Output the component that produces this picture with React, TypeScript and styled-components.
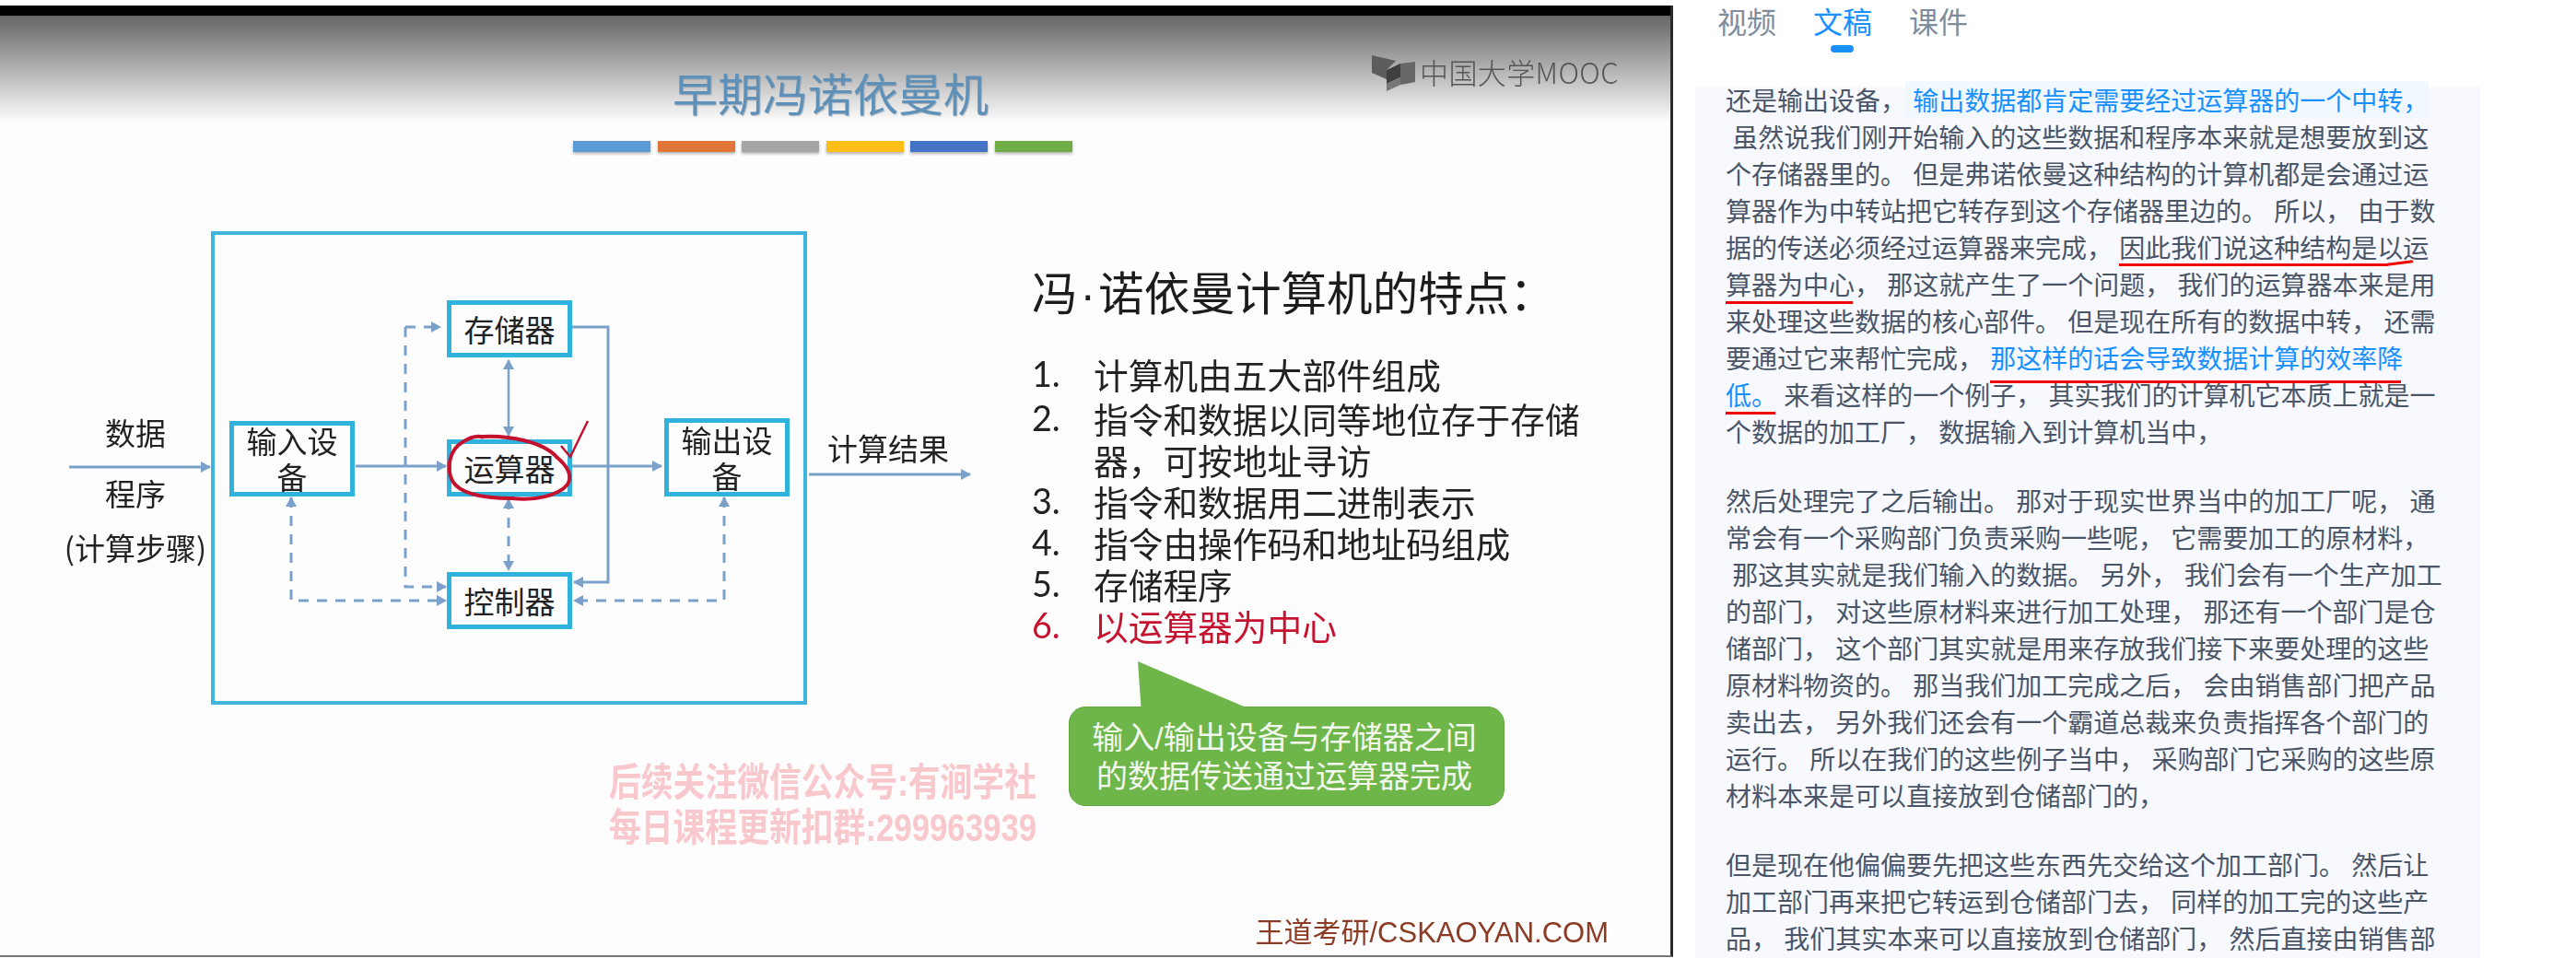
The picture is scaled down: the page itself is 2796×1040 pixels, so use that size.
import React from "react";
import styled, { createGlobalStyle } from "styled-components";

const CJK = `"Noto Sans CJK SC", "Liberation Sans", sans-serif`;

const GlobalStyle = createGlobalStyle`
  html, body {
    margin: 0;
    padding: 0;
    background: #fff;
    overflow: hidden;
  }
  * { box-sizing: border-box; }
`;

const bars = ["#5b9bd5", "#e07537", "#a5a5a5", "#fdbf17", "#4472c4", "#70ad47"];

const nodes = [
  { label: "存储器", x: 485, y: 86, w: 136, h: 62 },
  { label: "输入设备", x: 249, y: 217, w: 136, h: 82 },
  { label: "运算器", x: 485, y: 237, w: 136, h: 62 },
  { label: "输出设备", x: 721, y: 214, w: 136, h: 85 },
  { label: "控制器", x: 485, y: 381, w: 136, h: 62 },
];

const points = [
  "计算机由五大部件组成",
  "指令和数据以同等地位存于存储器，可按地址寻访",
  "指令和数据用二进制表示",
  "指令由操作码和地址码组成",
  "存储程序",
];

export default function App() {
  return (
    <Page>
      <GlobalStyle />
      <Slide>
        <BlackBand />
        <Header>
          <Title>早期冯诺依曼机</Title>
          <Logo>
            <svg width="48" height="40" viewBox="0 0 48 40">
              <polygon points="0,0 26,6 16,16 16,26 0,19" fill="#5c5c5c" />
              <polygon points="31,9 47,7 47,29 31,32" fill="#666" />
              <polygon points="16,16 31,9 31,24 16,31" fill="#3f3f3f" />
              <polygon points="16,31 31,24 31,32 16,39" fill="#777" />
            </svg>
            <LogoText>中国大学MOOC</LogoText>
          </Logo>
        </Header>
        <BarRow>
          {bars.map((c) => (
            <Bar key={c} $color={c} />
          ))}
        </BarRow>
        <Body>
          <Diagram>
            <Frame />
            <Wires width="1110" height="540" viewBox="0 0 1110 540">
              <defs>
                <marker id="head" markerUnits="userSpaceOnUse" markerWidth="11" markerHeight="12" refX="10" refY="6" orient="auto-start-reverse">
                  <path d="M0 0 L11 6 L0 12 Z" fill="#7ba1ca" />
                </marker>
              </defs>
              <g fill="none" stroke="#7ba1ca" strokeWidth="3">
                <path d="M75 267 H228" markerEnd="url(#head)" />
                <path d="M386 266 H484" markerEnd="url(#head)" />
                <path d="M621 266 H718" markerEnd="url(#head)" />
                <path d="M878 275 H1053" markerEnd="url(#head)" />
                <path d="M621 115 H660 V392 H623" markerEnd="url(#head)" />
                <path d="M552 151 V233" markerStart="url(#head)" markerEnd="url(#head)" strokeWidth="2.5" />
              </g>
              <g fill="none" stroke="#7ba1ca" strokeWidth="3" strokeDasharray="11 9">
                <path d="M440 115 H478" markerEnd="url(#head)" />
                <path d="M440 115 V397 H484" markerEnd="url(#head)" />
                <path d="M552 302 V379" markerStart="url(#head)" markerEnd="url(#head)" />
                <path d="M316 300 V412 H484" markerStart="url(#head)" markerEnd="url(#head)" />
                <path d="M786 300 V412 H623" markerStart="url(#head)" markerEnd="url(#head)" />
              </g>
            </Wires>
            {nodes.map((n) => (
              <Node key={n.label} $x={n.x} $y={n.y} $w={n.w} $h={n.h}>
                {n.label}
              </Node>
            ))}
            <Ink width="1110" height="540" viewBox="0 0 1110 540">
              <path
                d="M523 234 C552 232 590 240 604 256 C616 266 622 276 616 286 C606 298 580 304 556 301 C530 301 500 298 491 282 C484 268 488 248 502 240 C510 235 518 232 525 235"
                fill="none"
                stroke="#c5112e"
                strokeWidth="4"
              />
              <path d="M609 244 L619 256 L638 217" fill="none" stroke="#c5112e" strokeWidth="2.5" />
            </Ink>
            <Label $x={147} $y={229}>数据</Label>
            <Label $x={147} $y={295}>程序</Label>
            <Label $x={147} $y={354}>(计算步骤)</Label>
            <Label $x={964} $y={246}>计算结果</Label>
          </Diagram>
          <Features>
            <Heading>
              冯<HeadingDot>·</HeadingDot>诺依曼计算机的特点：
            </Heading>
            <PointList>
              {points.map((p, i) => (
                <Point key={p}>
                  <PointNo>{i + 1}.</PointNo>
                  <PointText>{p}</PointText>
                </Point>
              ))}
              <Point $red>
                <PointNo>6.</PointNo>
                <PointText>以运算器为中心</PointText>
              </Point>
            </PointList>
            <Bubble>
              输入/输出设备与存储器之间
              <br />
              的数据传送通过运算器完成
            </Bubble>
          </Features>
        </Body>
        <Watermark>
          后续关注微信公众号:有涧学社
          <br />
          每日课程更新扣群:299963939
        </Watermark>
        <Credit>王道考研/CSKAOYAN.COM</Credit>
      </Slide>

      <Side>
        <Tabs>
          <Tab>视频</Tab>
          <Tab $active>文稿</Tab>
          <Tab>课件</Tab>
        </Tabs>
        <Script>
          <Para>
            <Line>
              还是输出设备， <Blue $soft>输出数据都肯定需要经过运算器的一个中转，</Blue>
            </Line>
            <Line> 虽然说我们刚开始输入的这些数据和程序本来就是想要放到这</Line>
            <Line>个存储器里的。 但是弗诺依曼这种结构的计算机都是会通过运</Line>
            <Line>算器作为中转站把它转存到这个存储器里边的。 所以， 由于数</Line>
            <Line>
              据的传送必须经过运算器来完成， <Marked $drop={-1} $tail>因此我们说这种结构是以运</Marked>
            </Line>
            <Line>
              <Marked $drop={-2}>算器为中心</Marked>， 那这就产生了一个问题， 我们的运算器本来是用
            </Line>
            <Line>来处理这些数据的核心部件。 但是现在所有的数据中转， 还需</Line>
            <Line>
              要通过它来帮忙完成， <Marked $drop={-8}><Blue>那这样的话会导致数据计算的效率降</Blue></Marked>
            </Line>
            <Line>
              <Marked $drop={-2}><Blue>低。</Blue></Marked> 来看这样的一个例子， 其实我们的计算机它本质上就是一
            </Line>
            <Line>个数据的加工厂， 数据输入到计算机当中，</Line>
          </Para>
          <Para>
            <Line>然后处理完了之后输出。 那对于现实世界当中的加工厂呢， 通</Line>
            <Line>常会有一个采购部门负责采购一些呢， 它需要加工的原材料，</Line>
            <Line> 那这其实就是我们输入的数据。 另外， 我们会有一个生产加工</Line>
            <Line>的部门， 对这些原材料来进行加工处理， 那还有一个部门是仓</Line>
            <Line>储部门， 这个部门其实就是用来存放我们接下来要处理的这些</Line>
            <Line>原材料物资的。 那当我们加工完成之后， 会由销售部门把产品</Line>
            <Line>卖出去， 另外我们还会有一个霸道总裁来负责指挥各个部门的</Line>
            <Line>运行。 所以在我们的这些例子当中， 采购部门它采购的这些原</Line>
            <Line>材料本来是可以直接放到仓储部门的，</Line>
          </Para>
          <Para>
            <Line>但是现在他偏偏要先把这些东西先交给这个加工部门。 然后让</Line>
            <Line>加工部门再来把它转运到仓储部门去， 同样的加工完的这些产</Line>
            <Line>品， 我们其实本来可以直接放到仓储部门， 然后直接由销售部</Line>
          </Para>
        </Script>
      </Side>
    </Page>
  );
}

const Page = styled.div`
  display: flex;
  width: 2796px;
  height: 1040px;
  overflow: hidden;
  font-family: ${CJK};
`;

const Slide = styled.div`
  position: relative;
  flex: none;
  width: 1816px;
  height: 1033px;
  margin-top: 6px;
  background: #fdfdfd;
  border-right: 3px solid #2a2a2a;
  border-bottom: 2px solid #777;
  overflow: hidden;
`;

const BlackBand = styled.div`
  height: 11px;
  background: #000;
`;

const Header = styled.div`
  position: relative;
  height: 116px;
  display: flex;
  justify-content: center;
  padding: 55px 10px 0 0;
  background: linear-gradient(#666 0%, #fdfdfd 100%);
`;

const Title = styled.div`
  font-size: 49px;
  line-height: 56px;
  color: #5f90b8;
  text-shadow: 1px 1px 1px rgba(60, 90, 120, 0.35);
  white-space: nowrap;
  filter: blur(0.4px);
`;

const Logo = styled.div`
  position: absolute;
  left: 1489px;
  top: 43px;
  display: flex;
  align-items: flex-start;
  gap: 4px;
  filter: blur(0.6px);
`;

const LogoText = styled.div`
  font-size: 31px;
  line-height: 36px;
  font-weight: 300;
  letter-spacing: 0.4px;
  color: #555;
  white-space: nowrap;
`;

const BarRow = styled.div`
  display: flex;
  gap: 7.6px;
  margin: 20px 0 0 622px;
`;

const Bar = styled.div<{ $color: string }>`
  width: 84px;
  height: 12px;
  background: ${(p) => p.$color};
  box-shadow: 0 2px 3px rgba(0, 0, 0, 0.3);
`;

const Body = styled.div`
  display: flex;
  margin-top: 75px;
  filter: blur(0.4px);
`;

const Diagram = styled.div`
  position: relative;
  flex: none;
  width: 1120px;
  height: 540px;
`;

const Frame = styled.div`
  position: absolute;
  left: 229px;
  top: 11px;
  width: 647px;
  height: 514px;
  border: 4px solid #3fb5dd;
`;

const Wires = styled.svg`
  position: absolute;
  left: 0;
  top: 0;
`;

const Ink = styled.svg`
  position: absolute;
  left: 0;
  top: 0;
  z-index: 2;
`;

const Node = styled.div<{ $x: number; $y: number; $w: number; $h: number }>`
  position: absolute;
  left: ${(p) => p.$x}px;
  top: ${(p) => p.$y}px;
  width: ${(p) => p.$w}px;
  height: ${(p) => p.$h}px;
  display: flex;
  align-items: center;
  justify-content: center;
  text-align: center;
  border: 5px solid #2fb2dc;
  background: #fdfdfd;
  font-size: 33px;
  line-height: 39px;
  color: #222;
`;

const Label = styled.div<{ $x: number; $y: number }>`
  position: absolute;
  left: ${(p) => p.$x}px;
  top: ${(p) => p.$y}px;
  transform: translate(-50%, -50%);
  font-size: 33px;
  line-height: 40px;
  color: #222;
  white-space: nowrap;
`;

const Features = styled.div`
  display: flex;
  flex-direction: column;
  padding-top: 45px;
`;

const Heading = styled.div`
  height: 60px;
  font-size: 49.6px;
  line-height: 60px;
  color: #1c1c1c;
  white-space: nowrap;
`;

const HeadingDot = styled.span`
  font-family: "Liberation Sans", sans-serif;
  line-height: 1;
  margin: 0 3px;
`;

const PointList = styled.div`
  display: flex;
  flex-direction: column;
  margin-top: 38px;
`;

const Point = styled.div<{ $red?: boolean }>`
  display: flex;
  font-size: 37.7px;
  line-height: 45px;
  color: ${(p) => (p.$red ? "#c5122f" : "#222")};

  &:first-child {
    margin-bottom: 3px;
  }
`;

const PointNo = styled.span`
  flex: none;
  width: 67px;
  font-family: Lato, "Liberation Sans", sans-serif;
`;

const PointText = styled.span`
  width: 540px;
`;

const Bubble = styled.div`
  position: relative;
  width: 473px;
  height: 108px;
  margin: 66px 0 0 40px;
  padding: 12px 5px 0 0;
  border: 1px solid #62a63f;
  border-radius: 18px;
  background: #6fb64a;
  color: #f3f8ee;
  font-family: "Liberation Sans", "Noto Sans CJK SC", sans-serif;
  font-size: 34px;
  line-height: 42px;
  text-align: center;
  white-space: nowrap;

  &::before {
    content: "";
    position: absolute;
    left: 74px;
    top: -50px;
    width: 120px;
    height: 51px;
    background: #6fb64a;
    clip-path: polygon(0 0, 100% 100%, 3% 100%);
  }
`;

const Watermark = styled.div`
  position: absolute;
  left: 661px;
  top: 818px;
  font-family: "Liberation Sans", "Noto Sans CJK SC", sans-serif;
  font-size: 34.8px;
  font-weight: 700;
  line-height: 41px;
  color: #f9c8cd;
  white-space: nowrap;
  transform: scaleY(1.2);
  transform-origin: left top;
  filter: blur(0.5px);
`;

const Credit = styled.div`
  position: absolute;
  right: 67px;
  bottom: 4px;
  font-family: "Liberation Sans", "Noto Sans CJK SC", sans-serif;
  font-size: 31px;
  line-height: 40px;
  color: #8c3b24;
  white-space: nowrap;
  filter: blur(0.4px);
`;

const Side = styled.div`
  flex: none;
  width: 876px;
  padding-left: 24px;
  display: flex;
  flex-direction: column;
`;

const Tabs = styled.div`
  display: flex;
  gap: 40px;
  height: 94px;
  padding-left: 24px;
`;

const Tab = styled.div<{ $active?: boolean }>`
  position: relative;
  height: 44px;
  font-size: 32px;
  line-height: 44px;
  color: ${(p) => (p.$active ? "#1890ff" : "#7f8c9c")};

  &::after {
    content: "";
    display: ${(p) => (p.$active ? "block" : "none")};
    position: absolute;
    left: 19px;
    top: 49px;
    width: 25px;
    height: 8px;
    border-radius: 4px;
    background: #1890ff;
  }
`;

const Script = styled.div`
  width: 852px;
  flex: 1;
  min-height: 0;
  padding-left: 33px;
  background: #f7f9fe;
`;

const Para = styled.div`
  margin-bottom: 35px;

  &:first-child {
    margin-top: -6px;
  }

  &:last-child {
    margin-bottom: 0;
  }
`;

const Line = styled.div`
  height: 40px;
  font-size: 28px;
  line-height: 40px;
  color: #4a5568;
  white-space: pre;
  word-spacing: 1px;
`;

const Blue = styled.span<{ $soft?: boolean }>`
  color: #1890ff;
  ${(p) => (p.$soft ? "background: #f1f8ff; padding: 0 0 0 8px; margin-left: -8px;" : "")}
`;

const Marked = styled.span<{ $drop: number; $tail?: boolean }>`
  position: relative;

  &::after {
    content: "";
    position: absolute;
    left: 0;
    right: ${(p) => (p.$tail ? "44px" : "2px")};
    bottom: ${(p) => p.$drop}px;
    height: 3px;
    background: #f00000;
  }

  &::before {
    content: "";
    display: ${(p) => (p.$tail ? "block" : "none")};
    position: absolute;
    right: 17px;
    bottom: ${(p) => p.$drop + 2}px;
    width: 28px;
    height: 3px;
    background: #f00000;
    transform: rotate(-7deg);
  }
`;
